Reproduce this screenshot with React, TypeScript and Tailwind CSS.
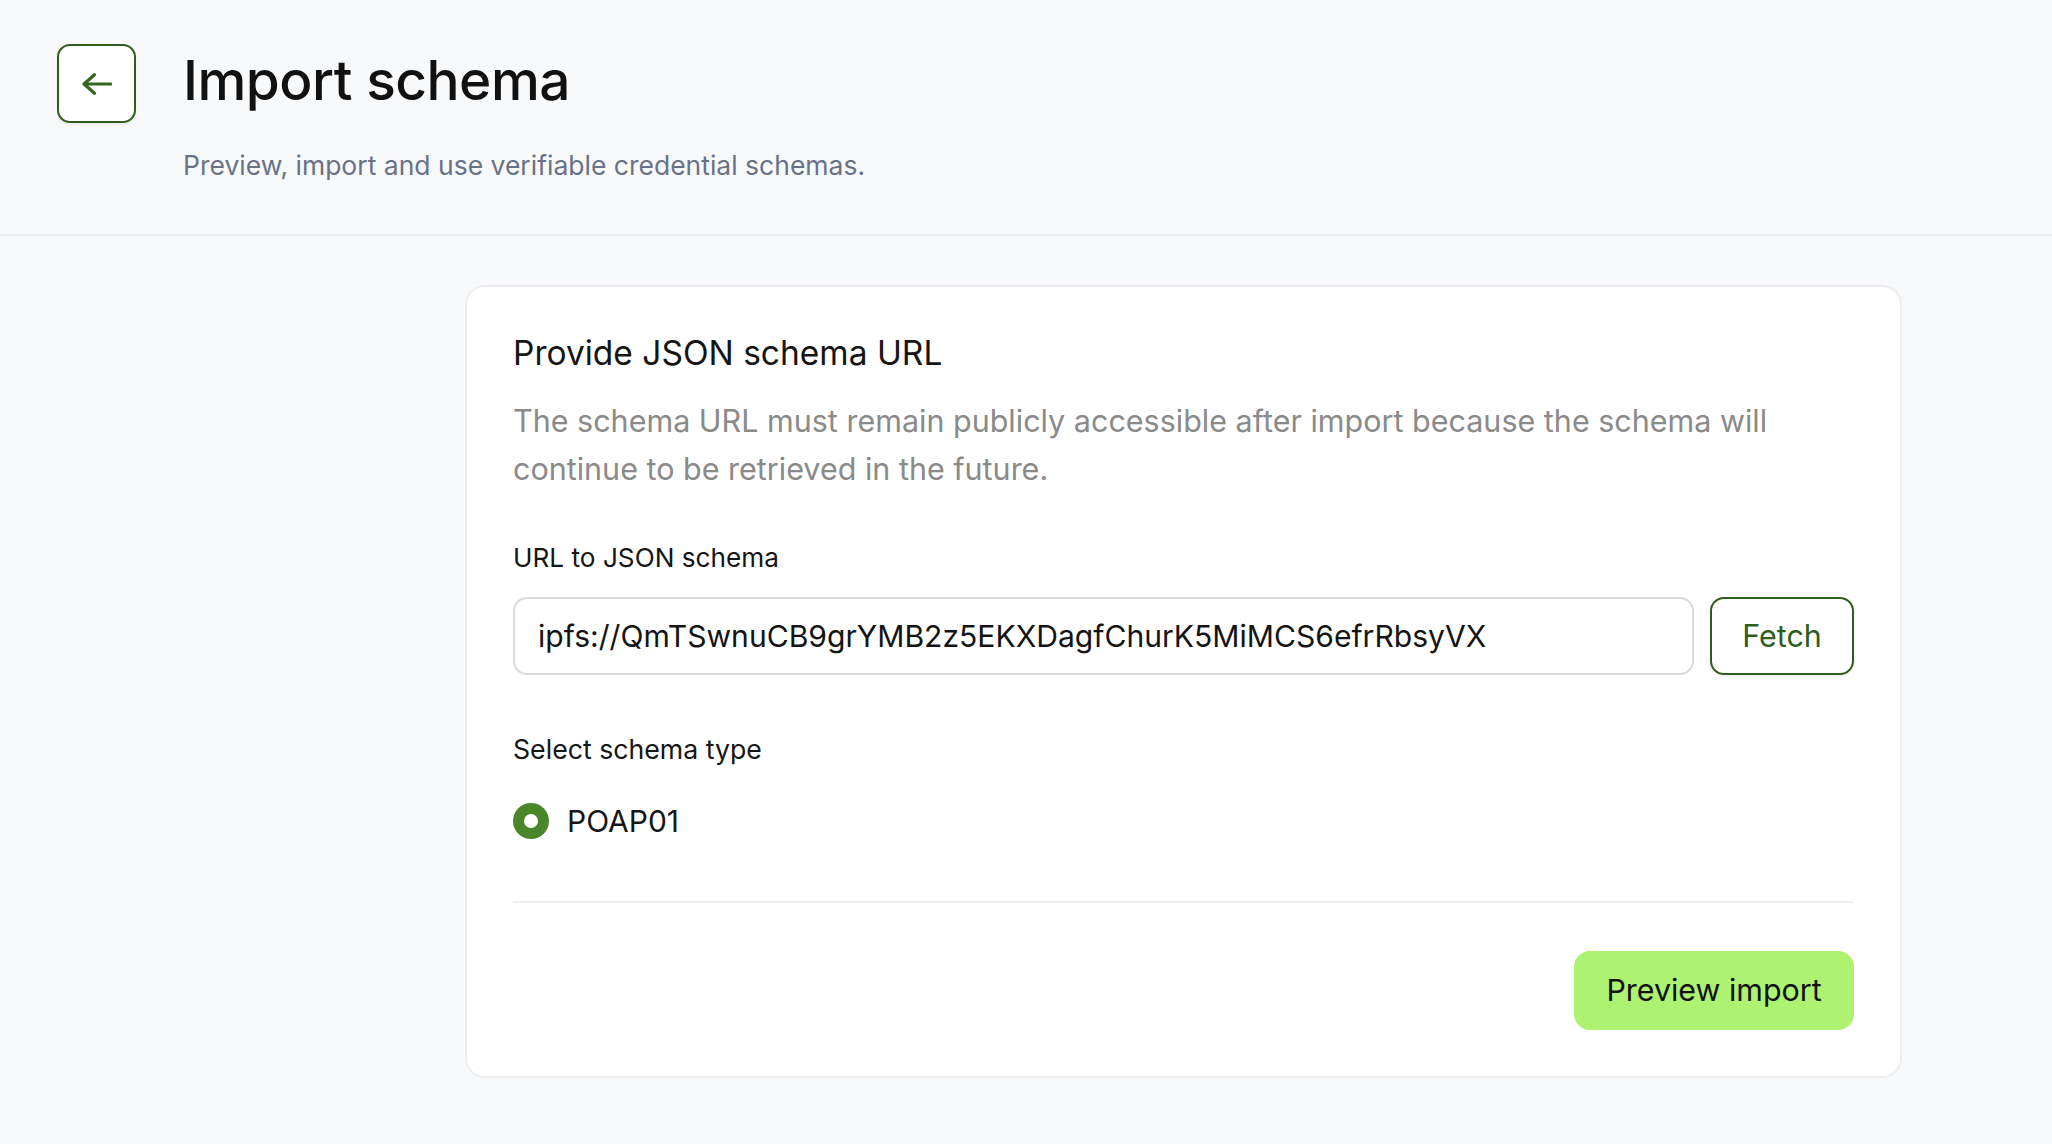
import React from "react";

const font = { fontFamily: "Inter, 'Noto Sans', sans-serif" };

export default function App() {
  return (
    <div className="min-h-screen w-full bg-[#f8f9fb] text-[#141414]" style={font}>
      <header className="pt-[44px] pb-[53px] pl-[57px] border-b-2 border-[#e9ebee]">
        <div className="flex items-start gap-[47px]">
          <button className="w-[79px] h-[79px] shrink-0 rounded-[13px] border-2 border-[#2f5d1c] bg-white shadow-[0_2px_3px_rgba(0,0,0,0.06)] flex items-center justify-center">
            <svg width="30" height="22" viewBox="0 0 30 22" fill="none">
              <path
                d="M12.5 1.8 L2 11 L12.5 20.2 M2 11 H28.5"
                stroke="#35661f"
                strokeWidth="3.2"
                strokeLinecap="round"
                strokeLinejoin="round"
              />
            </svg>
          </button>
          <div className="pt-[9px]">
            <h1 className="text-[55px] leading-none font-medium tracking-[-0.5px] text-[#111111]">
              Import schema
            </h1>
            <p className="mt-[41px] text-[26.5px] leading-[32px] text-[#687287]">
              Preview, import and use verifiable credential schemas.
            </p>
          </div>
        </div>
      </header>

      <main className="pt-[49px] pl-[465px] pr-[150px] pb-[60px]">
        <section className="rounded-[20px] border-2 border-[#eeeef0] bg-white p-[46px]">
          <h2 className="text-[33.5px] leading-[41px] font-normal text-[#151515]">
            Provide JSON schema URL
          </h2>
          <p className="mt-[23px] text-[30.5px] leading-[48px] text-[#8a8a8a]">
            The schema URL must remain publicly accessible after import because the schema will
            continue to be retrieved in the future.
          </p>

          <label className="block mt-[47px] text-[26.2px] leading-[36px] text-[#161616]">
            URL to JSON schema
          </label>
          <div className="mt-[21px] flex gap-[16px]">
            <input
              readOnly
              value="ipfs://QmTSwnuCB9grYMB2z5EKXDagfChurK5MiMCS6efrRbsyVX"
              className="flex-1 h-[78px] rounded-[14px] border-2 border-[#dadada] bg-white px-[23px] text-[30.1px] text-[#141414] outline-none"
              style={font}
            />
            <button className="w-[144px] h-[78px] rounded-[14px] border-2 border-[#2f5d1c] bg-white text-[30.5px] text-[#2f5d1c] shadow-[0_2px_3px_rgba(0,0,0,0.05)]">
              Fetch
            </button>
          </div>

          <div className="mt-[56px] text-[26.7px] leading-[36px] text-[#161616]">
            Select schema type
          </div>
          <div className="mt-[36px] h-[36px] flex items-center gap-[18px]">
            <span className="w-[36px] h-[36px] rounded-full bg-[#4a872b] flex items-center justify-center">
              <span className="w-[14px] h-[14px] rounded-full bg-white" />
            </span>
            <span className="text-[30px] leading-[36px] text-[#161616]">POAP01</span>
          </div>

          <div className="mt-[62px] border-t-2 border-[#efefef]" />

          <div className="mt-[48px] flex justify-end">
            <button className="w-[280px] h-[79px] rounded-[16px] bg-[#adf271] text-[30.4px] text-[#111111]">
              Preview import
            </button>
          </div>
        </section>
      </main>
    </div>
  );
}
